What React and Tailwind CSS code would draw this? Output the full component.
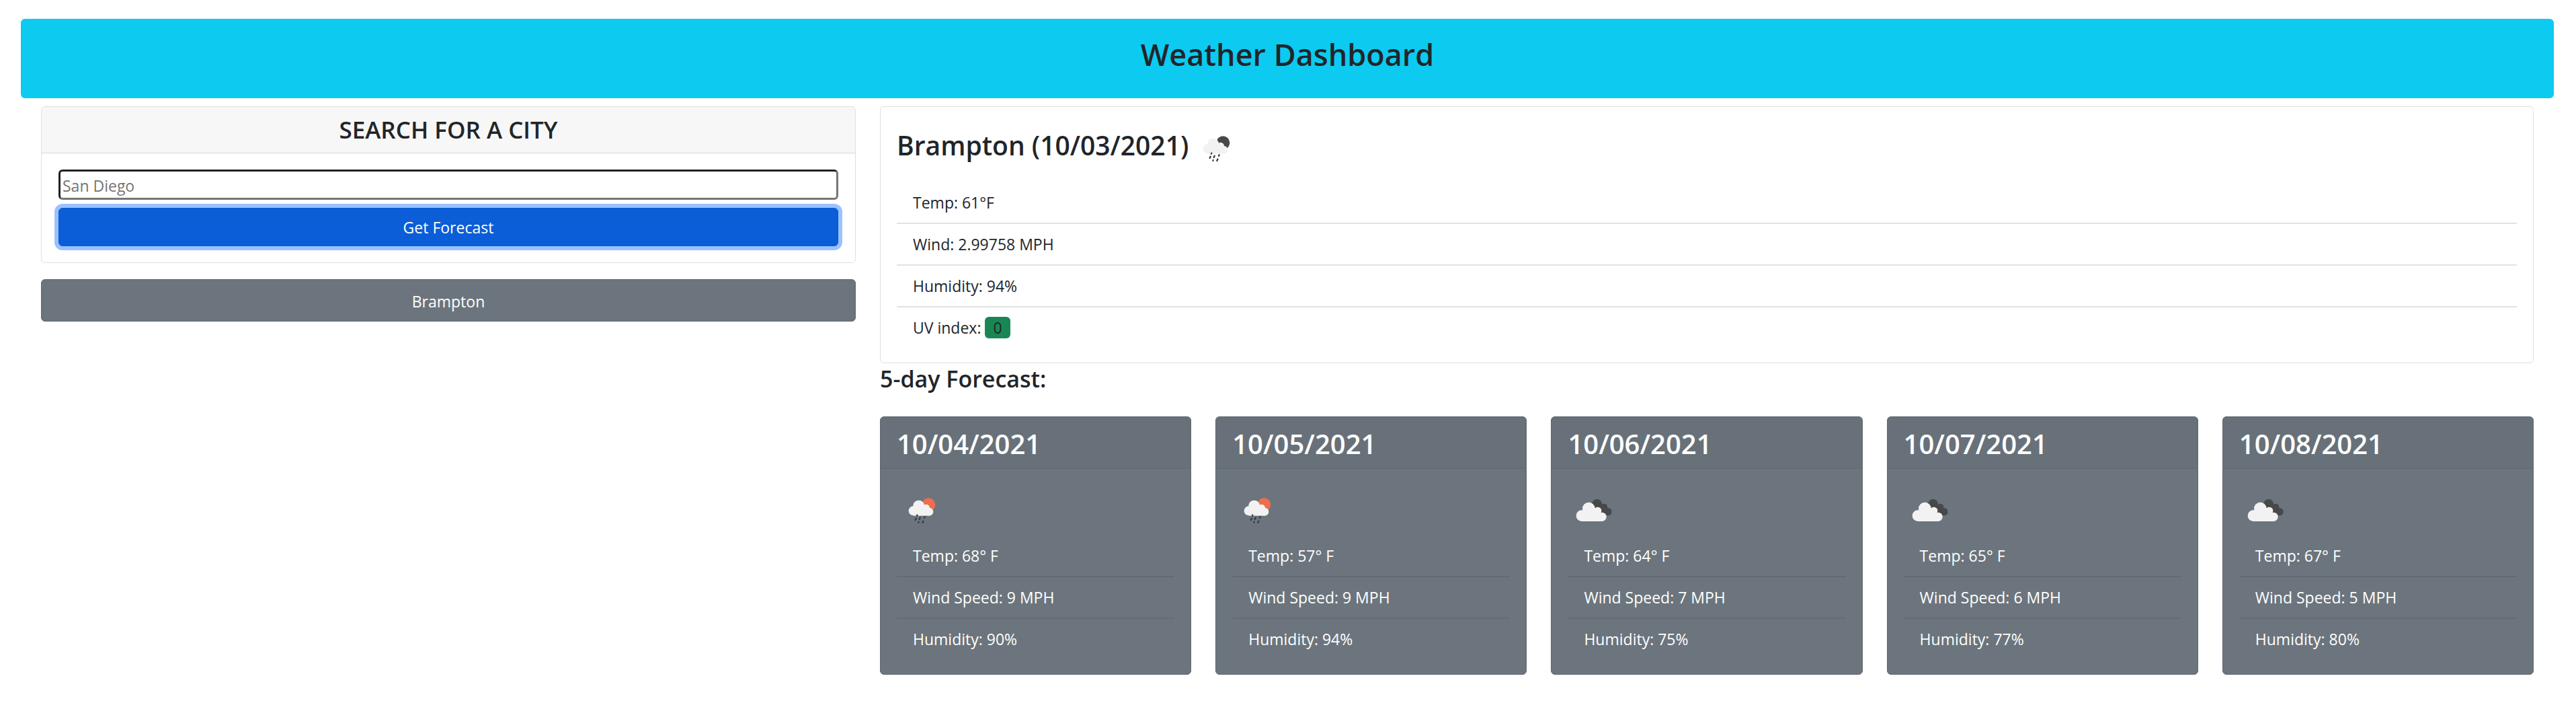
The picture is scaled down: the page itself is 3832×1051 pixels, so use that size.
import React from "react";

const details = ["Temp: 61°F", "Wind: 2.99758 MPH", "Humidity: 94%"];

const forecast = [
  { date: "10/04/2021", icon: "rain-day", temp: 68, wind: 9, humidity: 90 },
  { date: "10/05/2021", icon: "rain-day", temp: 57, wind: 9, humidity: 94 },
  { date: "10/06/2021", icon: "clouds", temp: 64, wind: 7, humidity: 75 },
  { date: "10/07/2021", icon: "clouds", temp: 65, wind: 6, humidity: 77 },
  { date: "10/08/2021", icon: "clouds", temp: 67, wind: 5, humidity: 80 },
];

function RainIcon({ disc, label }) {
  return (
    <svg viewBox="12 3 225 225" className="size-[75px] shrink-0" role="img" aria-label={label}>
      <circle cx="154" cy="91" r="30" fill={disc} />
      <g fill="#f2f2f2">
        <circle cx="86" cy="118" r="21" />
        <circle cx="110" cy="96" r="25" />
        <circle cx="143" cy="105" r="16" />
        <circle cx="157" cy="122" r="18" />
        <path d="M86 110h71v30H86z" />
      </g>
      <g stroke="#3c3c3e" strokeWidth="7" strokeLinecap="round">
        <path d="M103 137l-1 3M98 152l-3 7M116 149l-3 7M137 145l-2 4M110 168l-1 2M130 164l-3 7" />
      </g>
    </svg>
  );
}

function CloudsIcon() {
  return (
    <svg viewBox="37 3 225 225" className="size-[75px] shrink-0" role="img" aria-label="Broken clouds">
      <g fill="#484848">
        <circle cx="168" cy="88" r="22" />
        <circle cx="200" cy="101" r="15" />
        <circle cx="217" cy="122" r="17" />
        <path d="M150 100l34-10 36 30-3 19h-30z" />
      </g>
      <g fill="#f2f2f2">
        <circle cx="100" cy="140" r="25" />
        <circle cx="131" cy="108" r="28" />
        <circle cx="171" cy="118" r="17" />
        <circle cx="190" cy="145" r="20" />
        <path d="M100 120l60-14 28 24 2 35h-90z" />
      </g>
    </svg>
  );
}

function ForecastCard({ day }) {
  return (
    <article className="rounded-md border border-[#5f6770] bg-[#6c757d] text-white">
      <header className="border-b border-[#5f6770] bg-black/3 px-6 pt-3.5 pb-2.5">
        <h4 className="text-[40px] leading-[52px] font-semibold">{day.date}</h4>
      </header>
      <div className="px-6 pt-6 pb-[22px]">
        {day.icon === "clouds" ? <CloudsIcon /> : <RainIcon disc="#ec6e4c" label="Rain" />}
        <ul className="divide-y-2 divide-[#636b74]">
          <li className="px-6 py-3">Temp: {day.temp}° F</li>
          <li className="px-6 py-3">Wind Speed: {day.wind} MPH</li>
          <li className="px-6 py-3">Humidity: {day.humidity}%</li>
        </ul>
      </div>
    </article>
  );
}

export default function App() {
  return (
    <div className="bg-white pt-7 pb-12 font-['Open_Sans','Noto_Sans',sans-serif] text-[23px] leading-9 text-[#212529]">
      <header className="mr-[33px] ml-[31px] rounded-md bg-[#0dcaf0] pt-6 pb-9 text-center">
        <h1 className="text-[45px] leading-[58px] font-semibold">Weather Dashboard</h1>
      </header>

      <main className="mt-3 mr-[63px] ml-[61px] grid grid-cols-3 items-start gap-x-9">
        <aside>
          <section className="rounded-md border border-[#dfdfdf]">
            <header className="rounded-t-[5px] border-b border-[#d8d8d8] bg-[#f7f7f7] py-3 text-center">
              <h2 className="text-[35px] leading-11 font-semibold">
                <label htmlFor="city">SEARCH FOR A CITY</label>
              </h2>
            </header>
            <form className="flex flex-col gap-3 px-[25px] py-6" onSubmit={(e) => e.preventDefault()}>
              <input
                id="city"
                type="text"
                placeholder="San Diego"
                className="h-[45px] w-full rounded-md border-3 border-t-[#222222] border-r-[#767676] border-b-[#767676] border-l-[#222222] px-[3px] pt-0.5 text-[#212529] outline-none placeholder:text-[#757575]"
              />
              <button
                type="submit"
                className="h-[57px] w-full rounded-md border border-[#0a58ca] bg-[#0b5ed7] text-white ring-6 ring-[#9ac2fe]"
              >
                Get Forecast
              </button>
            </form>
          </section>
          <button
            type="button"
            className="mt-6 block w-full rounded-md border border-[#5f6770] bg-[#6c757d] pt-3.5 pb-[11px] text-center text-white"
          >
            Brampton
          </button>
        </aside>

        <div className="col-span-2">
          <section className="rounded-md border border-[#dfdfdf] px-6 pt-6 pb-[22px]">
            <div className="mb-3 flex h-[76px] items-start gap-1">
              <h2 className="pt-2 text-[39px] leading-[50px] font-semibold">Brampton (10/03/2021)</h2>
              <RainIcon disc="#484848" label="Rain at night" />
            </div>
            <ul className="divide-y-2 divide-[#e2e2e2]">
              {details.map((d) => (
                <li key={d} className="px-6 py-3">{d}</li>
              ))}
              <li className="px-6 py-3">
                UV index: <span className="rounded-md bg-[#198754] px-3">0</span>
              </li>
            </ul>
          </section>

          <h3 className="mb-[34px] pt-px text-[34px] leading-11 font-semibold">5-day Forecast:</h3>

          <section className="grid grid-cols-5 gap-9">
            {forecast.map((day) => (
              <ForecastCard key={day.date} day={day} />
            ))}
          </section>
        </div>
      </main>
    </div>
  );
}
